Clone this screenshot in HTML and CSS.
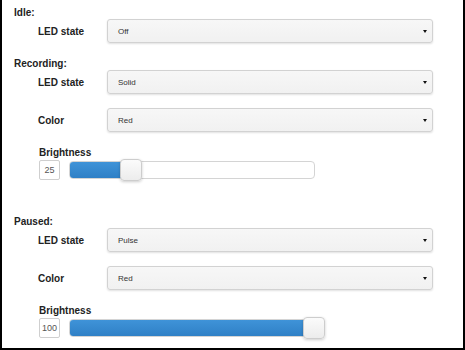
FILE: index.html
```html
<!DOCTYPE html>
<html lang="en">
<head>
    <meta charset="UTF-8">
    <meta name="viewport" content="width=device-width, initial-scale=1.0">
    <title>LED Settings</title>
    <link rel="stylesheet" href="styles.css">
</head>
<body>
    <div class="panel">
        <section class="group">
            <h3 class="group-title">Idle:</h3>
            <div class="field-row">
                <label class="field-label">LED state</label>
                <div class="select"><span>Off</span><span class="caret"></span></div>
            </div>
        </section>

        <section class="group">
            <h3 class="group-title">Recording:</h3>
            <div class="field-row">
                <label class="field-label">LED state</label>
                <div class="select"><span>Solid</span><span class="caret"></span></div>
            </div>
            <div class="field-row">
                <label class="field-label">Color</label>
                <div class="select"><span>Red</span><span class="caret"></span></div>
            </div>
            <div class="slider-field">
                <label class="field-label">Brightness</label>
                <div class="slider-row">
                    <input class="slider-value" type="text" value="25">
                    <div class="slider-track">
                        <div class="slider-fill" style="width: 25%"></div>
                        <span class="slider-handle" style="left: 25%"></span>
                    </div>
                </div>
            </div>
        </section>

        <section class="group">
            <h3 class="group-title">Paused:</h3>
            <div class="field-row">
                <label class="field-label">LED state</label>
                <div class="select"><span>Pulse</span><span class="caret"></span></div>
            </div>
            <div class="field-row">
                <label class="field-label">Color</label>
                <div class="select"><span>Red</span><span class="caret"></span></div>
            </div>
            <div class="slider-field">
                <label class="field-label">Brightness</label>
                <div class="slider-row">
                    <input class="slider-value" type="text" value="100">
                    <div class="slider-track">
                        <div class="slider-fill" style="width: 100%"></div>
                        <span class="slider-handle" style="left: 100%"></span>
                    </div>
                </div>
            </div>
        </section>
    </div>
</body>
</html>
```

FILE: styles.css
```css
* {
    margin: 0;
    padding: 0;
    box-sizing: border-box;
}

body {
    font-family: "Liberation Sans", Arial, sans-serif;
    color: #222;
    background: #fff;
}

.panel {
    width: 465px;
    height: 350px;
    border: 2px solid #000;
    border-top: none;
    padding: 8px 12px 0;
    overflow: hidden;
}

.group + .group {
    padding-top: 2px;
}

.group-title {
    font-size: 10px;
    line-height: 9px;
    font-weight: bold;
    margin-bottom: 2px;
}

.field-row {
    display: flex;
    align-items: center;
    padding-left: 24px;
    margin-bottom: 14px;
}

.field-label {
    display: block;
    font-size: 10px;
    font-weight: bold;
    color: #222;
}

.field-row .field-label {
    width: 69px;
}

.select {
    display: flex;
    align-items: center;
    justify-content: space-between;
    width: 326px;
    height: 24px;
    padding: 0 5px 0 10px;
    background: linear-gradient(#f7f7f7, #f1f1f1);
    border: 1px solid #d2d2d2;
    border-radius: 3px;
    box-shadow: 0 1px 2px rgba(0, 0, 0, 0.12);
    font-size: 8px;
    color: #333;
}

.caret {
    width: 0;
    height: 0;
    border-left: 2.5px solid transparent;
    border-right: 2.5px solid transparent;
    border-top: 3px solid #111;
}

.slider-field {
    padding-left: 25px;
    padding-top: 2px;
    padding-bottom: 34px;
}

.group:last-child .slider-field {
    padding-bottom: 0;
}

.slider-field .field-label {
    line-height: 9px;
    margin-bottom: 2px;
}

.slider-row {
    display: flex;
    align-items: center;
    height: 22px;
}

.slider-value {
    width: 21px;
    height: 20px;
    border: 1px solid #cfcfcf;
    border-radius: 2px;
    background: #fff;
    font-family: inherit;
    font-size: 9px;
    color: #555;
    text-align: center;
    outline: none;
}

.slider-track {
    position: relative;
    width: 246px;
    height: 18px;
    margin-left: 9px;
    background: #fff;
    border: 1px solid #d4d4d4;
    border-radius: 4px;
}

.slider-fill {
    height: 100%;
    background: linear-gradient(#3f93d8, #2f80c6);
    border-radius: 3px 0 0 3px;
}

.slider-handle {
    position: absolute;
    top: -3px;
    width: 22px;
    height: 22px;
    margin-left: -11px;
    background: linear-gradient(#fbfbfb, #ececec);
    border: 1px solid #cdcdcd;
    border-radius: 4px;
    box-shadow: 0 1px 3px rgba(0, 0, 0, 0.2);
}
```
